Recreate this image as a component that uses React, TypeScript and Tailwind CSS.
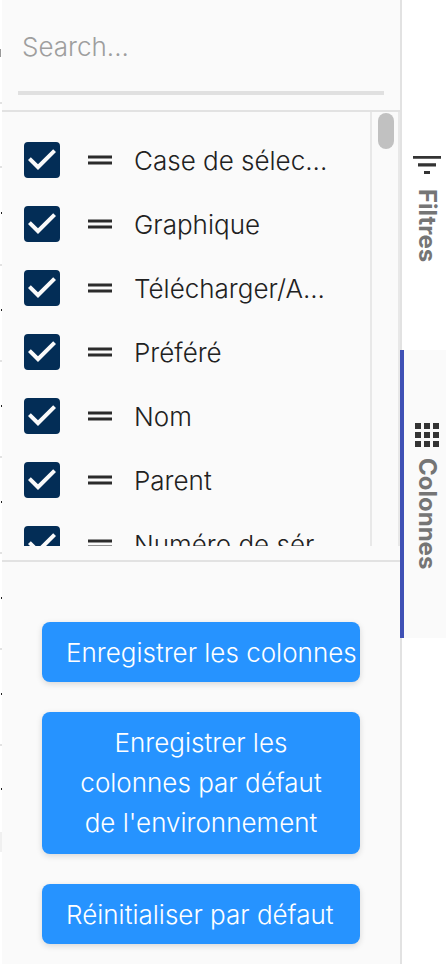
import { useState } from 'react';

const columns = [
  'Case de sélec...',
  'Graphique',
  'Télécharger/A...',
  'Préféré',
  'Nom',
  'Parent',
  'Numéro de sér...',
];

const gridRows = [64, 98, 96, 96, 96, 96, 96];

function DragHandle() {
  return (
    <svg width="24" height="12" viewBox="0 0 24 12" className="shrink-0" fill="#2b2b2b">
      <path d="M0 1.4h24v3.2H0zM0 7.4h24v3.2H0z" />
    </svg>
  );
}

function ColumnItem({ name }: { name: string }) {
  const [checked, setChecked] = useState(true);

  return (
    <li className="flex h-16 items-center">
      <label className="flex min-w-0 items-center">
        <span className="relative mr-7 flex h-9 w-9 shrink-0">
          <input
            type="checkbox"
            checked={checked}
            onChange={(e) => setChecked(e.target.checked)}
            className="h-9 w-9 appearance-none rounded border-2 border-[#032d56] checked:bg-[#032d56]"
          />
          {checked && (
            <svg viewBox="3 3 18 18" className="pointer-events-none absolute inset-0" fill="#fafafa">
              <path d="M10 17l-5-5 1.41-1.41L10 14.17l7.59-7.59L19 8l-9 9z" />
            </svg>
          )}
        </span>
        <DragHandle />
        <span className="ml-[22px] pt-0.5 whitespace-nowrap">{name}</span>
      </label>
    </li>
  );
}

// Edge of the data grid that stays visible beside the panel
function GridEdge() {
  return (
    <div className="flex w-0.5 shrink-0 flex-col overflow-hidden bg-white">
      <div className="h-[104px] shrink-0 border-b-2 border-[#e2e2e2] pt-[49px]">
        <div className="h-2 w-px bg-[#999999]" />
      </div>
      {gridRows.map((height, i) => (
        <div
          key={i}
          className="flex shrink-0 items-center border-b-2 border-[#e2e2e2] pb-1.5 pl-px"
          style={{ height }}
        >
          {i > 0 && <div className="h-0.5 w-px bg-[#222222]" />}
        </div>
      ))}
      <div className="flex h-[86px] shrink-0 items-center pl-px">
        <div className="h-0.5 w-px bg-[#222222]" />
      </div>
      <div className="h-5 shrink-0 bg-[#f0f0f0]" />
    </div>
  );
}

export default function App() {
  const [search, setSearch] = useState('');

  return (
    <div className="flex h-screen overflow-hidden bg-white font-['Inter',sans-serif] text-[26px] leading-10 font-[350] text-[#212121]">
      <GridEdge />

      <aside className="flex min-w-0 flex-1 flex-col border-r-2 border-[#e2e2e2] bg-[#fafafa]">
        {/* Search */}
        <div className="border-b-2 border-[#e2e2e2] px-4 pb-[15px]">
          <input
            type="text"
            aria-label="Search"
            placeholder="Search..."
            value={search}
            onChange={(e) => setSearch(e.target.value)}
            className="block h-[95px] w-full border-b-4 border-[#e0e0e0] px-1 pt-0.5 placeholder:text-[#9e9e9e] focus:outline-none"
          />
        </div>

        {/* Column list */}
        <div className="mb-3.5 flex h-[434px] shrink-0 overflow-hidden">
          <ul className="min-w-0 flex-1 overflow-hidden pt-4 pl-[22px]">
            {columns.map((name) => (
              <ColumnItem key={name} name={name} />
            ))}
          </ul>
          <div className="flex w-[30px] shrink-0 justify-center border-r-2 border-l-2 border-[#e8e8e8] pt-px pl-0.5">
            <div className="h-9 w-4 rounded-full bg-[#c1c1c1]" />
          </div>
        </div>

        {/* Actions */}
        <div className="flex flex-1 flex-col gap-[30px] border-t-2 border-[#e2e2e2] px-10 pt-[60px] text-white">
          <button className="rounded-lg bg-[#2693ff] px-6 pt-[11px] pb-[9px] text-left whitespace-nowrap shadow-[0_2px_6px_rgba(0,0,0,0.14)]">
            Enregistrer les colonnes
          </button>
          <button className="rounded-lg bg-[#2693ff] px-6 py-[11px] shadow-[0_2px_6px_rgba(0,0,0,0.14)]">
            Enregistrer les colonnes par défaut de l'environnement
          </button>
          <button className="rounded-lg bg-[#2693ff] px-6 pt-[11px] pb-[9px] text-left whitespace-nowrap shadow-[0_2px_6px_rgba(0,0,0,0.14)]">
            Réinitialiser par défaut
          </button>
        </div>
      </aside>

      {/* Side tabs */}
      <nav className="-ml-0.5 flex w-[46px] shrink-0 flex-col pt-[82px] text-2xl leading-8 font-bold text-[#757575]">
        <button className="flex h-[268px] flex-col items-center border-l-4 border-transparent pt-[74px] pl-1">
          <svg width="28" height="18" viewBox="0 0 28 18" fill="#333333">
            <path d="M0 0h28v2.7H0zM5 7.3h18v3.2H5zM11 15h6v3h-6z" />
          </svg>
          <span className="mt-[15px] [writing-mode:vertical-rl]">Filtres</span>
        </button>
        <button className="flex h-72 flex-col items-center border-l-4 border-[#3f51b5] bg-[#fafafa] pt-[73px] pl-1">
          <svg width="24" height="24" viewBox="0 0 24 24" fill="#333333">
            <path d="M0 0h6v6H0zM9 0h6v6H9zM18 0h6v6h-6zM0 9h6v6H0zM9 9h6v6H9zM18 9h6v6h-6zM0 18h6v6H0zM9 18h6v6H9zM18 18h6v6h-6z" />
          </svg>
          <span className="mt-[11px] [writing-mode:vertical-rl]">Colonnes</span>
        </button>
      </nav>
    </div>
  );
}
